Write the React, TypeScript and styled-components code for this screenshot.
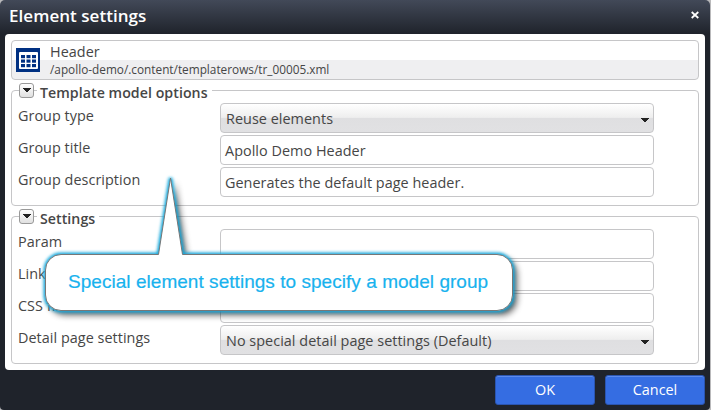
import React from "react";
import styled, { createGlobalStyle } from "styled-components";

const GlobalStyle = createGlobalStyle`
  * { box-sizing: border-box; }
  html, body { margin: 0; padding: 0; overflow: hidden; background: #b9b9bb; }
`;

const Dialog = styled.div`
  position: relative;
  width: 710px;
  height: 410px;
  padding: 0 5px;
  border-radius: 5px 5px 4px 4px;
  background: linear-gradient(#424958 0, #1f232b 34px);
  font-family: "Open Sans", "Noto Sans", sans-serif;
  font-size: 14.4px;
  letter-spacing: 0.04px;
  color: #464646;
  white-space: nowrap;
`;

const TitleBar = styled.header`
  display: flex;
  justify-content: space-between;
  height: 34px;
  padding: 4px 6px 0 4px;
  color: #fff;
`;

const Title = styled.h1`
  margin: 0;
  font-size: 17px;
  line-height: 24px;
  font-weight: 600;
`;

const CloseIcon = styled.svg`
  width: 8px;
  height: 8px;
  margin-top: 7px;
`;

const Panel = styled.main`
  height: 336px;
  padding: 6px;
  background: #fff;
  border-radius: 4px;
`;

const InfoBox = styled.section`
  display: flex;
  height: 40px;
  padding: 7px 4px;
  border: 1px solid #c6c6c8;
  border-radius: 4px;
  background: linear-gradient(#fff 0 50%, #efeff1 50%);
`;

const TableIcon = styled.svg`
  width: 24px;
  height: 24px;
  margin-right: 10px;
`;

const InfoText = styled.div`
  margin-top: -6px;
`;

const InfoTitle = styled.div`
  line-height: 19px;
`;

const InfoPath = styled.div`
  font-size: 11.8px;
  line-height: 16px;
  letter-spacing: 0;
`;

const Group = styled.section<{ $height: number }>`
  height: ${(p) => p.$height}px;
  margin-top: 10px;
  border: 1px solid #c6c6c8;
  border-radius: 4px;
`;

const Legend = styled.div`
  display: flex;
  width: fit-content;
  height: 20px;
  margin: -8px 0 0 7px;
  padding-right: 4px;
  background: #fff;
  font-size: 14.2px;
  font-weight: 600;
  line-height: 20px;
`;

const Toggle = styled.button`
  display: flex;
  align-items: center;
  justify-content: center;
  width: 15px;
  height: 15px;
  margin: 0 3px 0 0;
  padding: 0;
  border: 1px solid #999;
  border-radius: 3px;
  background: linear-gradient(#fff, #e0e0e0);
`;

const LegendRule = styled.i`
  width: 3px;
  height: 1px;
  margin: 7px 3px 0 -3px;
  background: #c6c6c8;
`;

const Rows = styled.div`
  display: grid;
  gap: 2px;
`;

const Row = styled.label`
  display: grid;
  grid-template-columns: 202px 434px;
  height: 30px;
  padding-left: 6px;
`;

const RowLabel = styled.span`
  line-height: 25px;
`;

const Field = styled.div<{ $select?: boolean }>`
  display: flex;
  align-items: center;
  justify-content: space-between;
  height: 30px;
  padding: 1px 4px 0 ${(p) => (p.$select ? 5 : 4)}px;
  border: 1px solid #c6c6c8;
  border-radius: 4px;
  background: ${(p) =>
    p.$select ? "linear-gradient(#fff, #eee 48%, #dfdfe1 50%, #e1e1e3)" : "#fff"};

  svg {
    margin-top: 3px;
  }
`;

const Footer = styled.footer`
  display: flex;
  justify-content: flex-end;
  gap: 10px;
  padding-top: 5px;
`;

const ActionButton = styled.button`
  width: 100px;
  height: 30px;
  padding: 0 0 1px;
  border: 1px solid #2b55b0;
  border-radius: 3px;
  background: #356de2;
  box-shadow: inset 0 1px #5c8aeb;
  color: #fff;
  font: 14.4px "Open Sans", sans-serif;
`;

const Callout = styled.div`
  position: absolute;
  left: 30px;
  top: 165px;
  width: 500px;
  height: 170px;
`;

const CalloutShape = styled.svg`
  display: block;
  overflow: visible;
`;

const CalloutText = styled.p`
  position: absolute;
  left: 38px;
  top: 106px;
  margin: 0;
  font: 19px/22px "Liberation Sans", Arial, sans-serif;
  letter-spacing: 0.04px;
  color: #18b2ee;
  -webkit-text-stroke: 0.2px #18b2ee;
`;

const Arrow = () => (
  <svg width="8" height="5" viewBox="0 0 8 5" shapeRendering="crispEdges">
    <path d="M0 0H8V1H7V2H6V3H5V4H3V3H2V2H1V1H0Z" fill="#222" />
  </svg>
);

type Item = { label: string; value?: string; select?: boolean };

const modelItems: Item[] = [
  { label: "Group type", value: "Reuse elements", select: true },
  { label: "Group title", value: "Apollo Demo Header" },
  { label: "Group description", value: "Generates the default page header." },
];

const settingItems: Item[] = [
  { label: "Param" },
  { label: "Link" },
  { label: "CSS file" },
  { label: "Detail page settings", value: "No special detail page settings (Default)", select: true },
];

function OptionGroup({ title, items, height }: { title: string; items: Item[]; height: number }) {
  return (
    <Group $height={height}>
      <Legend>
        <Toggle aria-label={title}><Arrow /></Toggle>
        <LegendRule />
        {title}
      </Legend>
      <Rows>
        {items.map((item) => (
          <Row key={item.label}>
            <RowLabel>{item.label}</RowLabel>
            <Field $select={item.select}>
              <span>{item.value}</span>
              {item.select && <Arrow />}
            </Field>
          </Row>
        ))}
      </Rows>
    </Group>
  );
}

const calloutPath =
  "M31 89.5H128.500L140.500 13L152.500 89.5H467A15.500 15.500 0 0 1 482.500 105V130A15.500 15.500 0 0 1 467 145.500H31A15.500 15.500 0 0 1 15.500 130V105A15.500 15.500 0 0 1 31 89.5Z";

export default function App() {
  return (
    <>
      <GlobalStyle />
      <Dialog>
        <TitleBar>
          <Title>Element settings</Title>
          <CloseIcon viewBox="0 0 8 8">
            <path d="M0.7 1L7.300 7M7.300 1L0.7 7" stroke="#fff" strokeWidth="1.7" />
          </CloseIcon>
        </TitleBar>
        <Panel>
          <InfoBox>
            <TableIcon viewBox="0 0 24 24">
              <path d="M0 0H24V24H0Z" fill="#003082" />
              <rect x="3" y="4" width="19" height="17" rx="1" fill="#fff" />
              {[7, 11.5, 16].map((y) =>
                [5, 10.5, 16].map((x) => (
                  <rect key={`${x}-${y}`} x={x} y={y} width="4" height="3.200" fill="#003082" />
                )),
              )}
            </TableIcon>
            <InfoText>
              <InfoTitle>Header</InfoTitle>
              <InfoPath>/apollo-demo/.content/templaterows/tr_00005.xml</InfoPath>
            </InfoText>
          </InfoBox>
          <OptionGroup title="Template model options" items={modelItems} height={116} />
          <OptionGroup title="Settings" items={settingItems} height={148} />
        </Panel>
        <Footer>
          <ActionButton>OK</ActionButton>
          <ActionButton>Cancel</ActionButton>
        </Footer>
        <Callout>
          <CalloutShape width="500" height="170" viewBox="0 0 500 170">
            <defs>
              <filter id="shadow" x="-10%" y="-20%" width="120%" height="140%">
                <feOffset dx="4" dy="4" />
                <feGaussianBlur stdDeviation="3.500" />
              </filter>
              <filter id="halo" x="-10%" y="-20%" width="120%" height="140%">
                <feGaussianBlur stdDeviation="1.500" />
              </filter>
            </defs>
            <path d={calloutPath} fill="#000" opacity=".7" filter="url(#shadow)" />
            <path d={calloutPath} fill="#12aadf" stroke="#12aadf" strokeWidth="4" filter="url(#halo)" />
            <path d={calloutPath} fill="#fff" stroke="#777" />
          </CalloutShape>
          <CalloutText>Special element settings to specify a model group</CalloutText>
        </Callout>
      </Dialog>
    </>
  );
}
